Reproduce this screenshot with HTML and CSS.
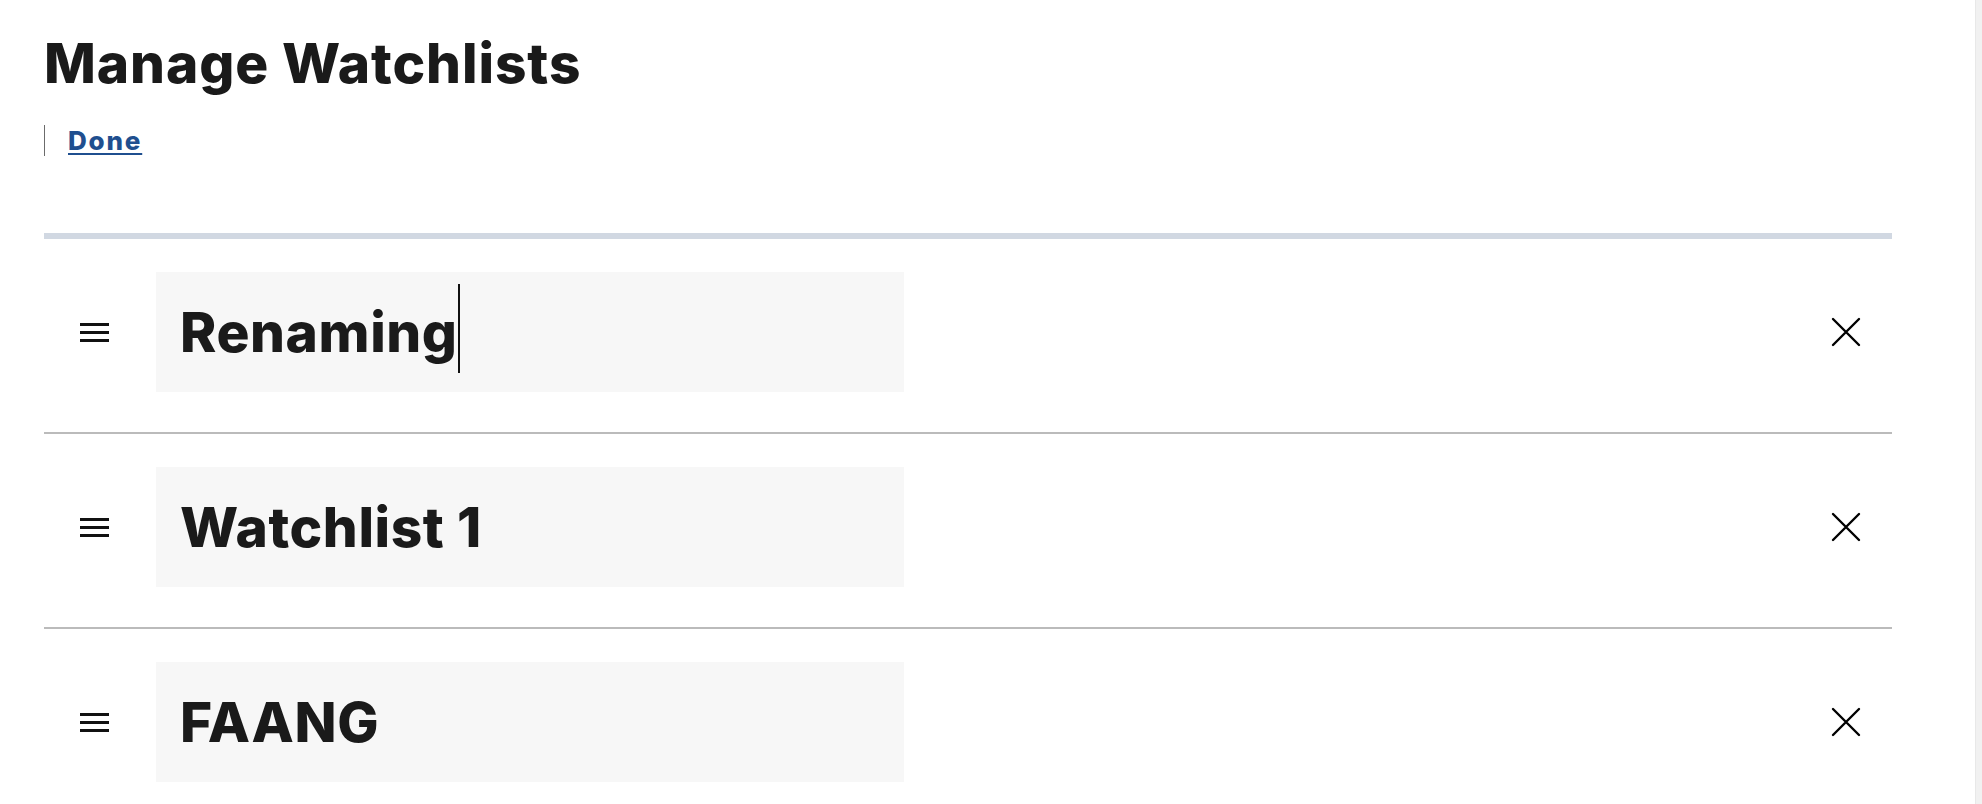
FILE: index.html
```html
<!DOCTYPE html>
<html lang="en">
<head>
<meta charset="utf-8">
<title>Manage Watchlists</title>
<link rel="stylesheet" href="styles.css">
</head>
<body>
<main class="page">
  <h1 class="title">Manage Watchlists</h1>
  <div class="actions"><a class="done" href="#">Done</a></div>
  <ul class="lists">
    <li class="row">
      <span class="handle"><svg width="29" height="19" viewBox="0 0 29 19"><rect x="0" y="0" width="29" height="3" fill="#111"/><rect x="0" y="8" width="29" height="3" fill="#111"/><rect x="0" y="16" width="29" height="3" fill="#111"/></svg></span>
      <div class="field">Renaming<span class="caret"></span></div>
      <button class="remove" aria-label="Remove"><svg width="30" height="30" viewBox="0 0 30 30"><path d="M2 2 L28 28 M28 2 L2 28" stroke="#000" stroke-width="2.4" stroke-linecap="round"/></svg></button>
    </li>
    <li class="row">
      <span class="handle"><svg width="29" height="19" viewBox="0 0 29 19"><rect x="0" y="0" width="29" height="3" fill="#111"/><rect x="0" y="8" width="29" height="3" fill="#111"/><rect x="0" y="16" width="29" height="3" fill="#111"/></svg></span>
      <div class="field">Watchlist 1</div>
      <button class="remove" aria-label="Remove"><svg width="30" height="30" viewBox="0 0 30 30"><path d="M2 2 L28 28 M28 2 L2 28" stroke="#000" stroke-width="2.4" stroke-linecap="round"/></svg></button>
    </li>
    <li class="row">
      <span class="handle"><svg width="29" height="19" viewBox="0 0 29 19"><rect x="0" y="0" width="29" height="3" fill="#111"/><rect x="0" y="8" width="29" height="3" fill="#111"/><rect x="0" y="16" width="29" height="3" fill="#111"/></svg></span>
      <div class="field">FAANG</div>
      <button class="remove" aria-label="Remove"><svg width="30" height="30" viewBox="0 0 30 30"><path d="M2 2 L28 28 M28 2 L2 28" stroke="#000" stroke-width="2.4" stroke-linecap="round"/></svg></button>
    </li>
  </ul>
</main>
<div class="scrolltrack"></div>
</body>
</html>
```

FILE: styles.css
```css
html, body {
  margin: 0;
  padding: 0;
  background: #fff;
  overflow: hidden;
}
body {
  font-family: Inter, Lato, "Open Sans", Arial, sans-serif;
  color: #1a1a1a;
}
.page {
  width: 1848px;
  padding: 30px 0 0 44px;
}
.title {
  margin: 0;
  font-size: 55px;
  font-weight: 800;
  line-height: 67px;
  letter-spacing: 0.9px;
}
.actions {
  margin-top: 28px;
  border-left: 1px solid #6b6b6b;
  height: 31px;
  display: flex;
  align-items: center;
}
.done {
  margin-left: 23px;
  font-size: 26px;
  font-weight: 800;
  line-height: 31px;
  letter-spacing: 1.8px;
  color: #1f4f8f;
  text-decoration: underline;
  text-decoration-thickness: 2px;
  text-underline-offset: 3px;
}
.lists {
  list-style: none;
  margin: 77px 0 0;
  padding: 0;
  border-top: 6px solid #d1d8e2;
}
.row {
  display: flex;
  align-items: center;
  padding: 33px 0 40px;
  border-bottom: 2px solid #bbbbbb;
}
.handle {
  margin-left: 36px;
  width: 29px;
  height: 19px;
  display: flex;
}
.field {
  margin-left: 47px;
  width: 724px;
  height: 120px;
  padding-left: 24px;
  background: #f7f7f7;
  display: flex;
  align-items: center;
  font-size: 55px;
  font-weight: 800;
  letter-spacing: 0.6px;
  color: #1a1a1a;
}
.caret {
  display: inline-block;
  width: 2px;
  height: 89px;
  margin-left: 0;
  margin-top: -8px;
  background: #111;
}
.remove {
  margin-left: auto;
  margin-right: 31px;
  width: 30px;
  height: 30px;
  padding: 0;
  border: 0;
  background: none;
  display: flex;
}
.scrolltrack {
  position: fixed;
  top: 0;
  right: 0;
  width: 6px;
  height: 100%;
  background: #f1f1f1;
  border-left: 1px solid #e8e8e8;
}
```
